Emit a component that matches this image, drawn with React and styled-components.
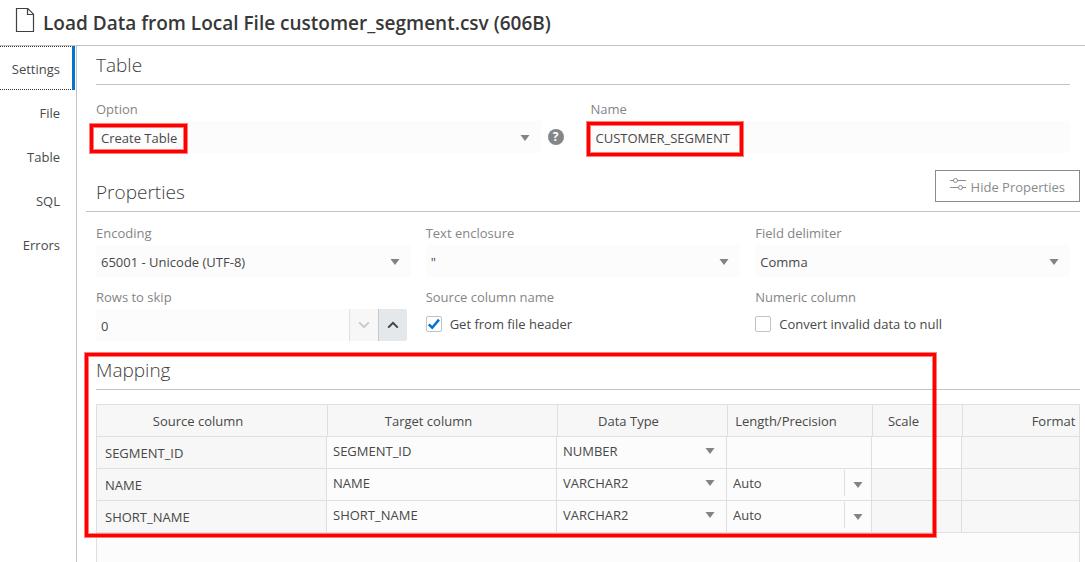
import React, { useState } from "react";
import styled, { createGlobalStyle, css } from "styled-components";

const GlobalStyle = createGlobalStyle`
  *, *::before, *::after { box-sizing: border-box; }
  body {
    margin: 0;
    background: #fff;
    color: #484848;
    font-family: "Open Sans", "Noto Sans", sans-serif;
    font-size: 13px;
    line-height: 20px;
  }
  button, input, select { font: inherit; color: inherit; }
`;

const Page = styled.div`
  display: flex;
  flex-direction: column;
  height: 100vh;
  overflow: hidden;
`;

const Header = styled.header`
  display: flex;
  align-items: center;
  gap: 8px;
  flex: none;
  height: 46px;
  padding: 0 16px 0 15px;
  border-bottom: 1px solid #c4c4c4;
  svg { margin-bottom: 6px; }
`;

const Title = styled.h1`
  margin: 0;
  font-size: 19px;
  line-height: 24px;
  font-weight: 600;
  color: #383838;
`;

const Body = styled.div`
  display: flex;
  flex: 1;
  min-height: 0;
`;

const Nav = styled.nav`
  flex: none;
  width: 77px;
  padding-right: 1px;
  border-right: 1px solid #c4c4c4;
`;

const NavLink = styled.a`
  display: flex;
  align-items: center;
  justify-content: flex-end;
  height: 44px;
  padding: 2px 15px 0 0;
  color: #484848;
  text-decoration: none;
  ${(p) =>
    p.$active &&
    css`
      padding-right: 12px;
      border-right: 3px solid #0572ce;
      background:
        repeating-linear-gradient(90deg, #333 0 1px, transparent 1px 2px) top / 100% 1px no-repeat,
        repeating-linear-gradient(90deg, #333 0 1px, transparent 1px 2px) bottom / 100% 1px no-repeat;
    `}
`;

const Main = styled.main`
  display: flex;
  flex-direction: column;
  flex: 1;
  min-width: 0;
  padding: 0 5px 0 19px;
`;

const SectionHead = styled.div`
  display: flex;
  align-items: flex-end;
  justify-content: space-between;
  border-bottom: 1px solid #c4c4c4;
  margin: ${(p) => p.$margin || "0"};
  padding-left: ${(p) => p.$indent || "0"};
`;

const Heading = styled.h2`
  margin: 0;
  font-size: 19px;
  line-height: 38px;
  font-weight: 300;
  color: #404040;
`;

const HideButton = styled.button`
  display: flex;
  align-items: center;
  gap: 5px;
  height: 32px;
  margin-bottom: 9px;
  padding: 2px 14px 0;
  background: #fff;
  border: 1px solid #8b8b8b;
  color: #888b8e;
  svg { margin-bottom: 6px; }
`;

const Fields = styled.div`
  display: grid;
  grid-template-columns: repeat(${(p) => p.$columns}, minmax(0, 1fr));
  gap: 10px 15px;
  padding: ${(p) => p.$top} 10px 0 0;
`;

const FieldBox = styled.div`
  display: flex;
  flex-direction: column;
  gap: 2px;
`;

const labelStyle = css`
  display: block;
  color: #858585;
`;
const Label = styled.label`
  ${labelStyle}
`;
const Caption = styled.span`
  ${labelStyle}
`;

const ControlRow = styled.div`
  position: relative;
  display: flex;
  align-items: center;
  gap: 7px;
  padding-right: ${(p) => p.$end || "0"};
`;

const SelectWrap = styled.div`
  position: relative;
  flex: 1;
  min-width: 0;
  > svg {
    position: absolute;
    right: 11px;
    top: ${(p) => (p.$cell ? "11px" : "14px")};
    pointer-events: none;
  }
`;

const controlStyle = css`
  display: block;
  width: 100%;
  height: ${(p) => (p.$cell ? "28px" : "32px")};
  margin: 0;
  padding: ${(p) => (p.$cell ? "0 6px" : "2px 5px 0")};
  border: 0;
  border-radius: ${(p) => (p.$cell ? "0" : "2px")};
  background: #fcfcfc;
  outline: 0;
  appearance: none;
`;
const Select = styled.select`
  ${controlStyle}
`;
const Input = styled.input`
  ${controlStyle}
`;

const HelpButton = styled.button`
  display: grid;
  place-items: center;
  width: 16px;
  height: 16px;
  padding: 0;
  border: 0;
  border-radius: 50%;
  background: #83878a;
  color: #fff;
  font-size: 12px;
  line-height: 16px;
  font-weight: 700;
`;

const Spinner = styled.div`
  display: flex;
  margin-right: 4px;
`;

const SpinButton = styled.button`
  display: grid;
  place-items: center;
  flex: none;
  width: 29px;
  height: 32px;
  padding: 0;
  border: 0;
  border-left: 1px solid ${(p) => (p.disabled ? "#dfdfdf" : "#c4c8ca")};
  border-radius: ${(p) => (p.disabled ? "0" : "0 2px 2px 0")};
  background: ${(p) => (p.disabled ? "#f7f7f7" : "#e4e8ea")};
  color: ${(p) => (p.disabled ? "#c8cacb" : "#404040")};
`;

const Check = styled.label`
  display: flex;
  align-items: center;
  gap: 8px;
  height: 30px;
`;

const CheckBox = styled.input`
  appearance: none;
  flex: none;
  width: 16px;
  height: 16px;
  margin: 0;
  border: 1px solid #c0c4c6;
  border-radius: 2px;
  background: #fff;
`;

const CheckMark = styled.span`
  position: relative;
  display: flex;
  svg {
    position: absolute;
    inset: 0;
    pointer-events: none;
  }
`;

const Mapping = styled.section`
  position: relative;
  display: flex;
  flex-direction: column;
  flex: 1;
  min-height: 0;
  margin-top: 10px;
`;

const GridFrame = styled.div`
  flex: 1;
  min-height: 0;
  margin-top: 14px;
  border: 1px solid #dfdfdf;
  border-bottom: 0;
  background: #fcfcfc;
  overflow: hidden;
`;

const Grid = styled.table`
  width: 1075px;
  table-layout: fixed;
  border-collapse: separate;
  border-spacing: 0;
`;

const Th = styled.th`
  width: ${(p) => p.$width}px;
  height: 32px;
  padding: 0 28px 0 0;
  border-bottom: 1px solid #dfdfdf;
  background: #f7f7f7;
  font-weight: 400;
  text-align: center;
  white-space: nowrap;
  & + & { border-left: 1px solid #dfdfdf; }
`;

const Td = styled.td`
  height: 32px;
  padding: ${(p) => (p.$text ? "0 8px" : "0")};
  border-right: 1px solid #dfdfdf;
  border-bottom: 1px solid #dfdfdf;
  background: ${(p) => (p.$open ? "#fcfcfc" : "#f7f7f7")};
  vertical-align: ${(p) => (p.$text ? "middle" : "top")};
`;

const Combo = styled.div`
  display: flex;
  align-items: center;
`;

const ComboButton = styled.button`
  display: grid;
  place-items: center;
  flex: none;
  width: 27px;
  height: 26px;
  padding: 4px 0 0;
  border: 0;
  border-left: 1px solid #dfdfdf;
  background: #fcfcfc;
`;

const Highlight = styled.div`
  position: absolute;
  left: ${(p) => p.$left}px;
  top: ${(p) => p.$top}px;
  width: ${(p) => p.$width}px;
  height: ${(p) => p.$height}px;
  border: 3px solid #f00;
  box-shadow: 0 0 0 1px rgba(255, 0, 0, 0.5), inset 0 0 0 1px rgba(255, 0, 0, 0.5);
  pointer-events: none;
`;

const Arrow = () => (
  <svg width="10" height="6" viewBox="0 0 10 6" aria-hidden="true">
    <path d="M0.5 0h9L5 6z" fill="#808488" />
  </svg>
);

const Chevron = ({ up }) => (
  <svg width="12" height="8" viewBox="0 0 12 8" fill="none" stroke="currentColor" strokeWidth="2" aria-hidden="true">
    <path d={up ? "M1.2 6.6L6 1.8l4.8 4.8" : "M1.2 1.4L6 6.2l4.8-4.8"} />
  </svg>
);

const FileIcon = () => (
  <svg width="20" height="26" viewBox="0 0 20 26" fill="none" stroke="#404040" strokeWidth="1.2" aria-hidden="true">
    <path d="M1.5 1.5h11.3l5.7 5.7v17.3h-17z" />
    <path d="M12.5 1.8v5.7h5.8" />
  </svg>
);

const SlidersIcon = () => (
  <svg width="16" height="12" viewBox="0 0 16 12" fill="none" stroke="#888b8e" aria-hidden="true">
    <path d="M0 2.5h3.5M7.500 2.5H16M0 9.500h8.500M12.500 9.500H16" />
    <circle cx="5.500" cy="2.500" r="2" />
    <circle cx="10.500" cy="9.500" r="2" />
  </svg>
);

const SelectField = ({ id, label, value, end, children }) => (
  <FieldBox>
    <Label htmlFor={id}>{label}</Label>
    <ControlRow $end={end}>
      <SelectWrap>
        <Select id={id} defaultValue={value}>
          <option>{value}</option>
        </Select>
        <Arrow />
      </SelectWrap>
      {children}
    </ControlRow>
  </FieldBox>
);

const CheckField = ({ caption, label, initial }) => {
  const [on, setOn] = useState(initial);
  return (
    <FieldBox>
      <Caption>{caption}</Caption>
      <Check>
        <CheckMark>
          <CheckBox type="checkbox" checked={on} onChange={() => setOn(!on)} />
          {on && (
            <svg width="16" height="16" viewBox="0 0 16 16" fill="none" stroke="#0572ce" strokeWidth="2.500">
              <path d="M2.800 8.300l3.400 3.400L13 3.600" />
            </svg>
          )}
        </CheckMark>
        {label}
      </Check>
    </FieldBox>
  );
};

const tabs = ["Settings", "File", "Table", "SQL", "Errors"];

const columns = [
  ["Source column", 230],
  ["Target column", 230],
  ["Data Type", 170],
  ["Length/Precision", 145],
  ["Scale", 90],
  ["Format", 210],
];

const rows = [
  { name: "SEGMENT_ID", type: "NUMBER" },
  { name: "NAME", type: "VARCHAR2", length: "Auto" },
  { name: "SHORT_NAME", type: "VARCHAR2", length: "Auto" },
];

export default function App() {
  const [skip, setSkip] = useState(0);
  return (
    <Page>
      <GlobalStyle />
      <Header>
        <FileIcon />
        <Title>Load Data from Local File customer_segment.csv (606B)</Title>
      </Header>
      <Body>
        <Nav>
          {tabs.map((t, i) => (
            <NavLink key={t} href={`#${t.toLowerCase()}`} $active={i === 0}>
              {t}
            </NavLink>
          ))}
        </Nav>
        <Main>
          <SectionHead $margin="0 10px 0 0">
            <Heading>Table</Heading>
          </SectionHead>
          <Fields $columns={2} $top="14px">
            <SelectField id="option" label="Option" value="Create Table" end="12px">
              <HelpButton aria-label="Help">?</HelpButton>
              <Highlight $left={-6} $top={3} $width={97} $height={29} />
            </SelectField>
            <FieldBox>
              <Label htmlFor="name">Name</Label>
              <ControlRow>
                <Input id="name" defaultValue="CUSTOMER_SEGMENT" />
                <Highlight $left={-4} $top={1} $width={156} $height={34} />
              </ControlRow>
            </FieldBox>
          </Fields>

          <SectionHead $margin="17px 0 0 -10px" $indent="10px">
            <Heading>Properties</Heading>
            <HideButton>
              <SlidersIcon />
              Hide Properties
            </HideButton>
          </SectionHead>
          <Fields $columns={3} $top="11px">
            <SelectField id="encoding" label="Encoding" value="65001 - Unicode (UTF-8)" />
            <SelectField id="enclosure" label="Text enclosure" value={'"'} />
            <SelectField id="delimiter" label="Field delimiter" value="Comma" />
            <FieldBox>
              <Label htmlFor="skip">Rows to skip</Label>
              <Spinner>
                <Input id="skip" inputMode="numeric" value={skip} onChange={(e) => setSkip(Number(e.target.value) || 0)} />
                <SpinButton aria-label="Decrease" disabled={skip === 0} onClick={() => setSkip(skip - 1)}>
                  <Chevron />
                </SpinButton>
                <SpinButton aria-label="Increase" onClick={() => setSkip(skip + 1)}>
                  <Chevron up />
                </SpinButton>
              </Spinner>
            </FieldBox>
            <CheckField caption="Source column name" label="Get from file header" initial={true} />
            <CheckField caption="Numeric column" label="Convert invalid data to null" initial={false} />
          </Fields>

          <Mapping>
            <SectionHead>
              <Heading>Mapping</Heading>
            </SectionHead>
            <GridFrame>
              <Grid>
                <thead>
                  <tr>
                    {columns.map(([name, width]) => (
                      <Th key={name} $width={width} scope="col">
                        {name}
                      </Th>
                    ))}
                  </tr>
                </thead>
                <tbody>
                  {rows.map((r) => (
                    <tr key={r.name}>
                      <Td $text>{r.name}</Td>
                      <Td $open>
                        <Input $cell aria-label={`Target column for ${r.name}`} defaultValue={r.name} />
                      </Td>
                      <Td $open>
                        <SelectWrap $cell>
                          <Select $cell aria-label={`Data type for ${r.name}`} defaultValue={r.type}>
                            <option>{r.type}</option>
                          </Select>
                          <Arrow />
                        </SelectWrap>
                      </Td>
                      <Td $open>
                        {r.length && (
                          <Combo>
                            <Input $cell aria-label={`Length for ${r.name}`} defaultValue={r.length} />
                            <ComboButton aria-label={`Length choices for ${r.name}`}>
                              <Arrow />
                            </ComboButton>
                          </Combo>
                        )}
                      </Td>
                      <Td $open={!r.length} />
                      <Td />
                    </tr>
                  ))}
                </tbody>
              </Grid>
            </GridFrame>
            <Highlight $left={-11} $top={2} $width={851} $height={184} />
          </Mapping>
        </Main>
      </Body>
    </Page>
  );
}
